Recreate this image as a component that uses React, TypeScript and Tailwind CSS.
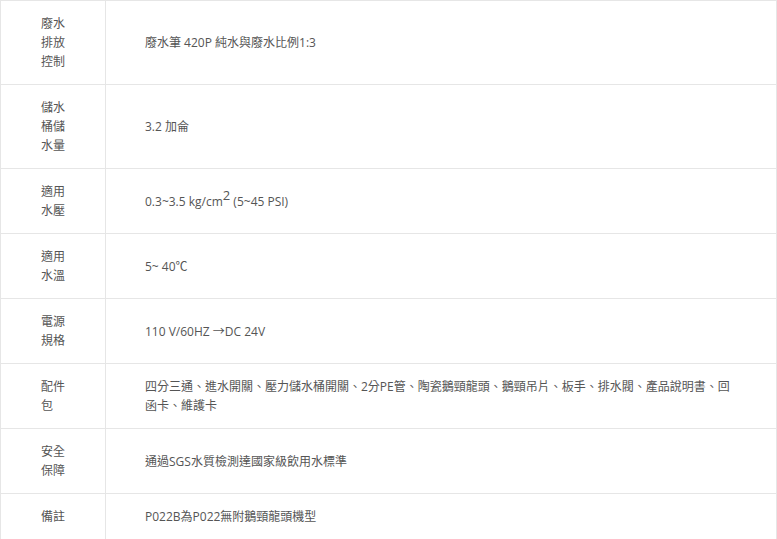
import React from "react";

const rows: { label: string[]; content: React.ReactNode }[] = [
  { label: ["廢水", "排放", "控制"], content: "廢水筆 420P 純水與廢水比例1:3" },
  { label: ["儲水", "桶儲", "水量"], content: "3.2 加侖" },
  {
    label: ["適用", "水壓"],
    content: (
      <>
        0.3~3.5 kg/cm<sup className="text-[13px] relative top-[-6px]">2</sup> (5~45 PSI)
      </>
    ),
  },
  { label: ["適用", "水溫"], content: "5~ 40℃" },
  { label: ["電源", "規格"], content: "110 V/60HZ →DC 24V" },
  {
    label: ["配件", "包"],
    content: (
      <>
        四分三通、進水開關、壓力儲水桶開關、2分PE管、陶瓷鵝頸龍頭、鵝頸吊片、板手、排水閥、產品說明書、回
        <br />
        函卡、維護卡
      </>
    ),
  },
  { label: ["安全", "保障"], content: "通過SGS水質檢測達國家級飲用水標準" },
  { label: ["備註"], content: "P022B為P022無附鵝頸龍頭機型" },
];

export default function App() {
  return (
    <div
      className="w-[777px] h-[539px] overflow-hidden bg-white text-[#555] text-[12px] leading-[19px]"
      style={{ fontFamily: '"Open Sans", "Noto Sans CJK TC", sans-serif' }}
    >
      <div className="grid grid-cols-[105px_1fr] border-t border-l border-[#e6e6e6]">
        {rows.map((r, i) => (
          <React.Fragment key={i}>
            <div className="border-r border-b border-[#e6e6e6] py-[13px] flex flex-col items-center justify-center">
              <div className="w-[24px] whitespace-nowrap">
                {r.label.map((l, j) => (
                  <div key={j}>{l}</div>
                ))}
              </div>
            </div>
            <div className="border-r border-b border-[#e6e6e6] py-[13px] pl-[39px] pr-[30px] flex items-center">
              <div className="whitespace-nowrap">{r.content}</div>
            </div>
          </React.Fragment>
        ))}
      </div>
    </div>
  );
}
